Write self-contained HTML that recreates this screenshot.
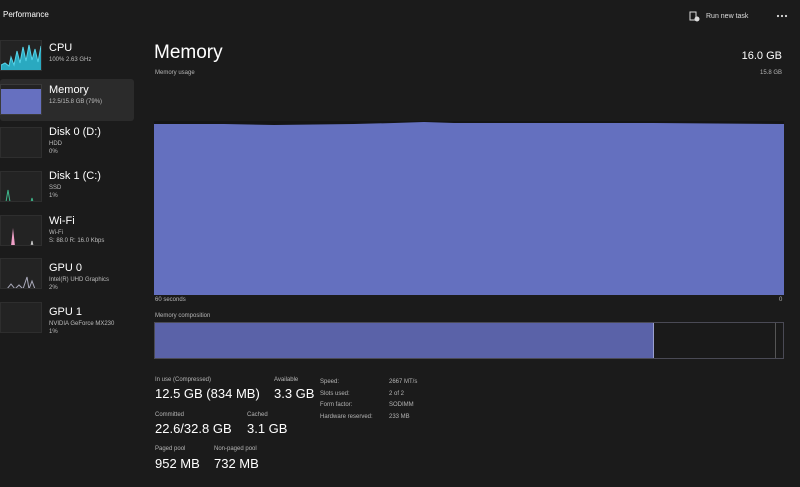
<!DOCTYPE html>
<html><head><meta charset="utf-8"><style>
*{margin:0;padding:0;box-sizing:border-box}
body{width:800px;height:487px;background:#1b1b1b;font-family:"Liberation Sans",sans-serif;color:#fff;position:relative;overflow:hidden}
.a{position:absolute;white-space:nowrap}
.sel{position:absolute;left:0;top:79px;width:134px;height:42px;background:#2b2b2b;border-radius:3px}
.th{position:absolute;left:0;width:42px;height:31px;background:#232323;border:1px solid #2e2e2e;overflow:hidden}
.t1{font-size:11px;color:#fff}
.t2{font-size:6px;color:#bdbdbd;line-height:8px}
.lbl{font-size:6px;color:#b5b5b5}
.val{font-size:13px;color:#fff}
</style></head><body>
<div class="a" style="left:3px;top:10px;font-size:8px">Performance</div>
<svg class="a" style="left:689px;top:11px" width="11" height="11" viewBox="0 0 11 11"><rect x="1" y="1" width="6" height="8" fill="none" stroke="#ddd"/><circle cx="8" cy="8" r="2.5" fill="#ddd"/></svg>
<div class="a" style="left:706px;top:13px;font-size:7px;color:#ddd">Run new task</div>
<svg class="a" style="left:776px;top:14px" width="12" height="4"><circle cx="2" cy="2" r="1.1" fill="#ddd"/><circle cx="6" cy="2" r="1.1" fill="#ddd"/><circle cx="10" cy="2" r="1.1" fill="#ddd"/></svg>

<div class="sel"></div>
<div class="th" style="top:40px"><svg width="42" height="31"><path d="M0 31V24L4 22 8 25 10 16 13 24 16 10 19 22 22 6 25 20 28 4 31 19 34 8 37 21 40 5 42 15V31Z" fill="#2aa9c0" stroke="#55d3e8"/></svg></div>
<div class="th" style="top:84px;border-color:#3a3a3a"><div style="position:absolute;left:0;top:4px;width:42px;height:27px;background:#6670c0"></div></div>
<div class="th" style="top:127px"></div>
<div class="th" style="top:171px"><svg width="42" height="31"><path d="M5 30L7 18 9 30M30 30L31 26 32 30" stroke="#3fb98d" fill="none"/><line x1="0" y1="30" x2="42" y2="30" stroke="#3a8a6a"/></svg></div>
<div class="th" style="top:215px"><svg width="42" height="31"><path d="M10 30L12 12 14 30Z" fill="#f0a0c8"/><path d="M30 30L31 25 32 30" stroke="#ccc" fill="none"/><line x1="0" y1="30" x2="42" y2="30" stroke="#a06080"/></svg></div>
<div class="th" style="top:258px"><svg width="42" height="31"><path d="M6 30L10 25 14 30 18 26 22 30 26 18 28 30 31 22 34 30" stroke="#aab" fill="none"/><line x1="0" y1="30" x2="42" y2="30" stroke="#667"/></svg></div>
<div class="th" style="top:302px"></div>

<div class="a t1" style="left:49px;top:42px">CPU</div><div class="a t2" style="left:49px;top:56px">100% 2.63 GHz</div>
<div class="a t1" style="left:49px;top:84px">Memory</div><div class="a t2" style="left:49px;top:98px">12.5/15.8 GB (79%)</div>
<div class="a t1" style="left:49px;top:126px">Disk 0 (D:)</div><div class="a t2" style="left:49px;top:140px">HDD<br>0%</div>
<div class="a t1" style="left:49px;top:170px">Disk 1 (C:)</div><div class="a t2" style="left:49px;top:184px">SSD<br>1%</div>
<div class="a t1" style="left:49px;top:215px">Wi-Fi</div><div class="a t2" style="left:49px;top:229px">Wi-Fi<br>S: 88.0 R: 16.0 Kbps</div>
<div class="a t1" style="left:49px;top:262px">GPU 0</div><div class="a t2" style="left:49px;top:276px">Intel(R) UHD Graphics<br>2%</div>
<div class="a t1" style="left:49px;top:306px">GPU 1</div><div class="a t2" style="left:49px;top:320px">NVIDIA GeForce MX230<br>1%</div>

<div class="a" style="left:154px;top:42px;font-size:19px">Memory</div>
<div class="a lbl" style="left:155px;top:70px">Memory usage</div>
<div class="a" style="right:18px;top:50px;font-size:11px">16.0 GB</div>
<div class="a lbl" style="right:18px;top:70px">15.8 GB</div>

<div class="a" style="left:154px;top:121px;width:630px;height:174px;background:#151515">
<svg width="630" height="174" style="position:absolute;left:0;top:0"><path d="M0 3L70 3 120 4 200 3 240 2 270 1 300 2 400 2 500 2 630 3V174H0Z" fill="#6470bf"/></svg></div>
<div class="a lbl" style="left:155px;top:297px">60 seconds</div>
<div class="a lbl" style="left:779px;top:297px">0</div>
<div class="a lbl" style="left:155px;top:313px">Memory composition</div>
<div class="a" style="left:154px;top:322px;width:630px;height:37px;border:1px solid #4a4a55;background:#1a1a1a">
<div style="position:absolute;left:0;top:0;width:499px;height:35px;background:#5a62a8;border-right:1px solid #9aa0d0"></div>
<div style="position:absolute;left:620px;top:0;width:1px;height:35px;background:#555"></div></div>

<div class="a lbl" style="left:155px;top:377px">In use (Compressed)</div>
<div class="a val" style="left:155px;top:386px">12.5 GB (834 MB)</div>
<div class="a lbl" style="left:274px;top:377px">Available</div>
<div class="a val" style="left:274px;top:386px">3.3 GB</div>
<div class="a lbl" style="left:155px;top:412px">Committed</div>
<div class="a val" style="left:155px;top:421px">22.6/32.8 GB</div>
<div class="a lbl" style="left:247px;top:412px">Cached</div>
<div class="a val" style="left:247px;top:421px">3.1 GB</div>
<div class="a lbl" style="left:155px;top:446px">Paged pool</div>
<div class="a val" style="left:155px;top:456px">952 MB</div>
<div class="a lbl" style="left:214px;top:446px">Non-paged pool</div>
<div class="a val" style="left:214px;top:456px">732 MB</div>

<div class="a lbl" style="left:320px;top:377px;line-height:11.5px">Speed:<br>Slots used:<br>Form factor:<br>Hardware reserved:</div>
<div class="a lbl" style="left:389px;top:377px;line-height:11.5px">2667 MT/s<br>2 of 2<br>SODIMM<br>233 MB</div>
</body></html>
